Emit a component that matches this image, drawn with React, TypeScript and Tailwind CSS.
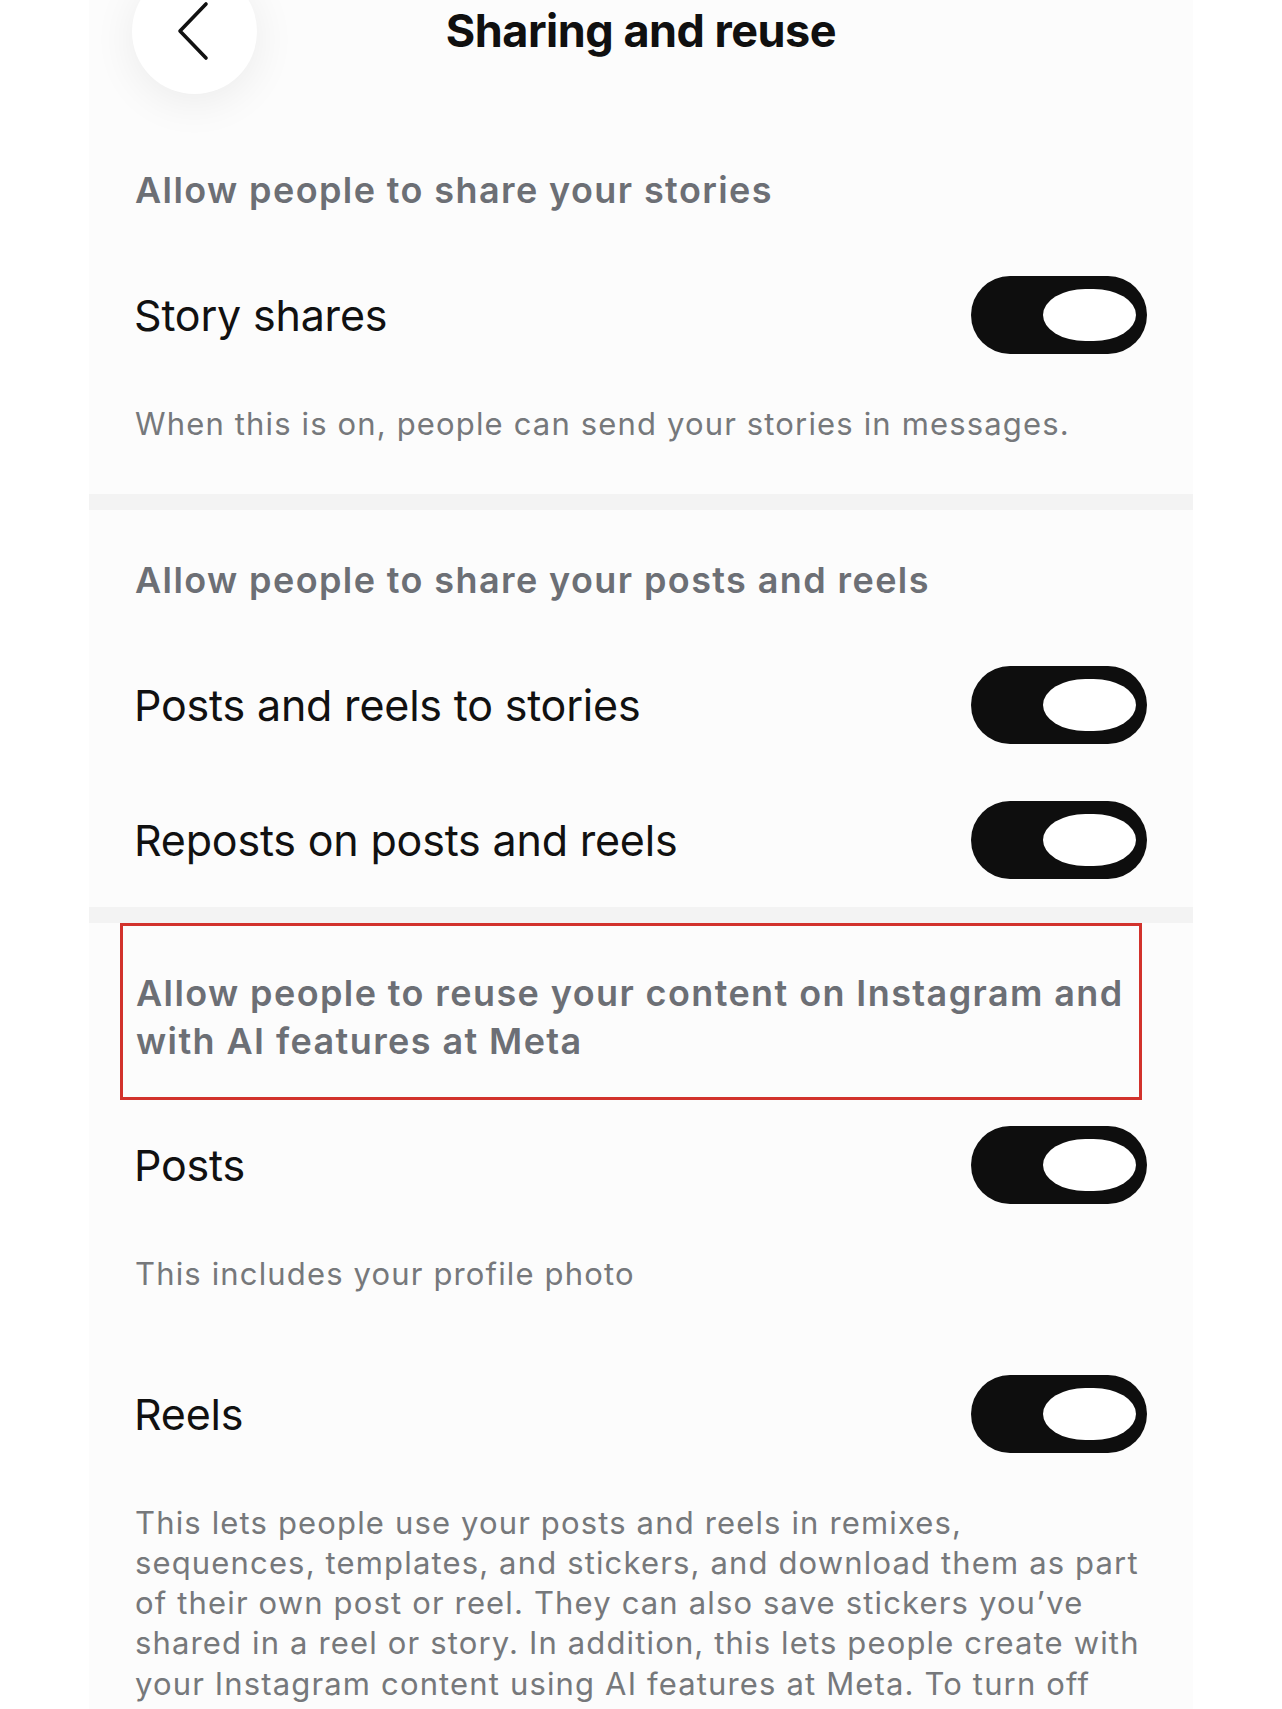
import React from "react";

function BackButton() {
  return (
    <button
      type="button"
      aria-label="Back"
      className="ml-[43px] flex h-[125px] w-[125px] items-center justify-center rounded-full bg-white shadow-[0_8px_44px_rgba(0,0,0,0.07)]"
    >
      <svg width="40" height="64" viewBox="0 0 40 64" fill="none">
        <path
          d="M31 5 L5 32 L31 59"
          stroke="#111"
          strokeWidth="3.6"
          strokeLinecap="round"
          strokeLinejoin="round"
        />
      </svg>
    </button>
  );
}

function Toggle() {
  return (
    <div className="flex h-[78px] w-[176px] shrink-0 items-center justify-end rounded-full bg-[#0e0e0e] pr-[11px]">
      <div className="h-[52px] w-[93px] rounded-[44px/27px] bg-white" />
    </div>
  );
}

function SectionTitle({ children }: { children: React.ReactNode }) {
  return (
    <div className="pl-[46px] text-[36px] font-semibold leading-[48px] tracking-[1.4px] whitespace-nowrap text-[#6c6f75]">
      {children}
    </div>
  );
}

function ToggleRow({ label, className = "" }: { label: string; className?: string }) {
  return (
    <div className={`flex h-[78px] items-center justify-between pl-[45px] pr-[46px] ${className}`}>
      <span className="text-[43px] leading-[78px] tracking-[-0.2px] text-[#111]">{label}</span>
      <Toggle />
    </div>
  );
}

function Desc({ children, className = "" }: { children: React.ReactNode; className?: string }) {
  return (
    <div
      className={`pl-[46px] text-[31px] leading-[40.25px] tracking-[1.15px] whitespace-nowrap text-[#76787b] ${className}`}
    >
      {children}
    </div>
  );
}

function Divider({ className = "" }: { className?: string }) {
  return <div className={`h-[16px] bg-[#f3f3f3] ${className}`} />;
}

export default function App() {
  return (
    <div className="min-h-screen bg-white [font-family:Inter,sans-serif]">
      <div className="mx-[89px] bg-[#fcfcfc] pb-[60px]">
        {/* Top bar: back button overhangs the top edge */}
        <header className="grid h-[62px] grid-cols-[1fr_auto_1fr] grid-rows-[62px] items-center">
          <div className="flex h-[62px] items-center">
            <BackButton />
          </div>
          <h1 className="text-[45px] font-bold leading-[62px] tracking-[-0.5px] text-[#101010]">
            Sharing and reuse
          </h1>
          <div />
        </header>

        {/* Stories */}
        <section className="pt-[104px]">
          <SectionTitle>Allow people to share your stories</SectionTitle>
          <ToggleRow label="Story shares" className="mt-[62px]" />
          <Desc className="mt-[50px]">When this is on, people can send your stories in messages.</Desc>
        </section>

        <Divider className="mt-[50px]" />

        {/* Posts and reels */}
        <section className="pt-[46px]">
          <SectionTitle>Allow people to share your posts and reels</SectionTitle>
          <ToggleRow label="Posts and reels to stories" className="mt-[62px]" />
          <ToggleRow label="Reposts on posts and reels" className="mt-[57px]" />
        </section>

        <Divider className="mt-[28px]" />

        {/* Reuse */}
        <section>
          <div className="ml-[31px] mr-[51px] border-[3px] border-[#d2322c] pt-[43px] pb-[32px] pl-[13px]">
            <div className="text-[36px] font-semibold leading-[48px] tracking-[1.4px] whitespace-nowrap text-[#6c6f75]">
              Allow people to reuse your content on Instagram and
              <br />
              with AI features at Meta
            </div>
          </div>
          <ToggleRow label="Posts" className="mt-[26px]" />
          <Desc className="mt-[50px]">This includes your profile photo</Desc>
          <ToggleRow label="Reels" className="mt-[80px]" />
          <Desc className="mt-[50px]">
            This lets people use your posts and reels in remixes,
            <br />
            sequences, templates, and stickers, and download them as part
            <br />
            of their own post or reel. They can also save stickers you’ve
            <br />
            shared in a reel or story. In addition, this lets people create with
            <br />
            your Instagram content using AI features at Meta. To turn off
            <br />
            reuse with AI features at Meta, turn off both posts and reels.
          </Desc>
        </section>
      </div>
    </div>
  );
}
